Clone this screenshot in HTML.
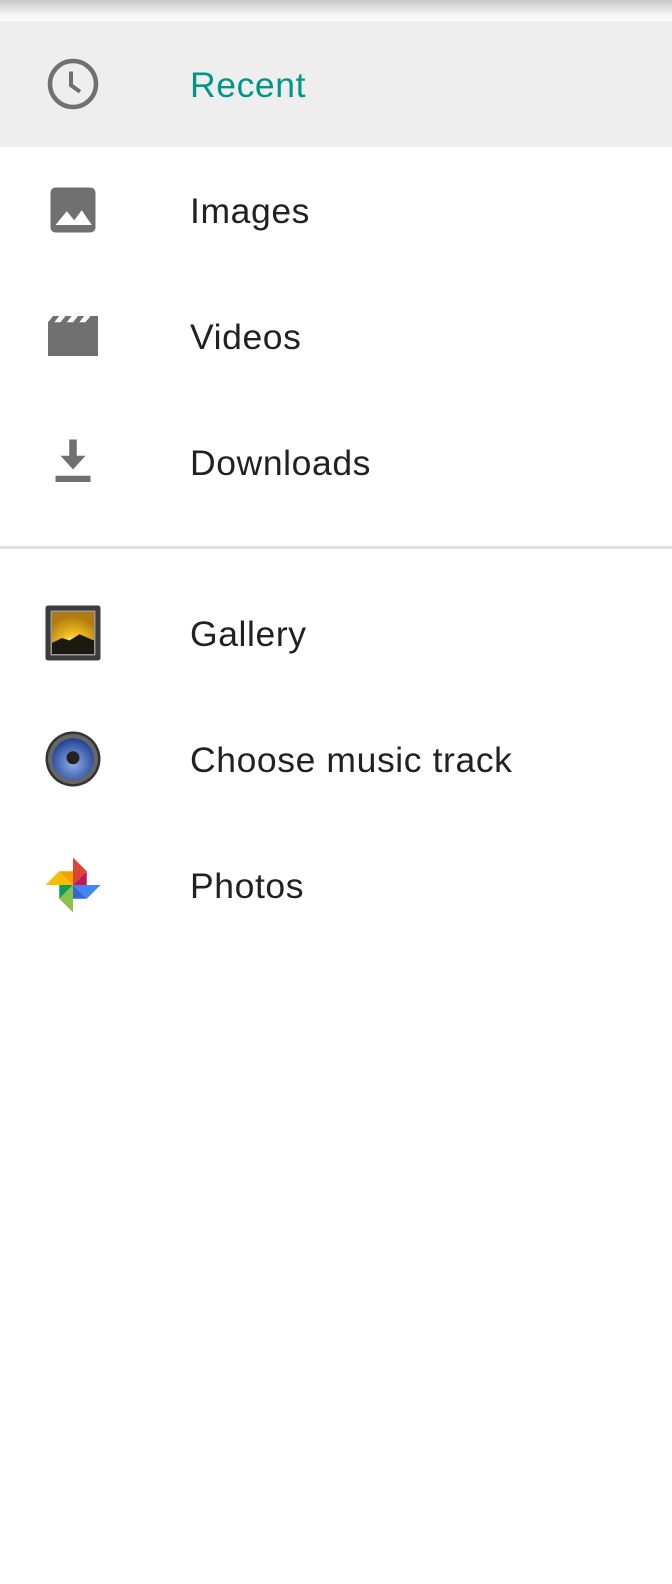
<!DOCTYPE html>
<html><head><meta charset="utf-8"><style>
body{margin:0;width:672px;height:1584px;background:#fff;font-family:"Liberation Sans",sans-serif;position:relative;overflow:hidden}
.sh{position:absolute;left:0;top:0;width:672px;height:21px;background:linear-gradient(#c8c8c8,#f4f4f4 70%,#fafafa)}
.row{position:absolute;left:0;width:672px;height:126px}
.t{position:absolute;left:190px;top:1px;line-height:126px;font-size:35.5px;letter-spacing:0.6px;color:#212121}
.ic{position:absolute;left:43px;top:33px;width:60px;height:60px}
</style></head><body>
<div class="sh"></div>
<div class="row" style="top:21px;background:#eeeeee">
<svg class="ic" viewBox="0 0 24 24"><circle cx="12" cy="12" r="9.2" fill="none" stroke="#707070" stroke-width="1.8"/><path d="M11.2 7v5.5l3.6 2.6" fill="none" stroke="#707070" stroke-width="1.6"/></svg>
<div class="t" style="color:#009688">Recent</div></div>
<div class="row" style="top:147px">
<svg class="ic" viewBox="0 0 24 24"><rect x="3" y="3" width="18" height="18" rx="2" fill="#707070"/><path d="M5 18l4.5-5.5 3 3.6 3-4L19.5 18z" fill="#fff"/></svg>
<div class="t">Images</div></div>
<div class="row" style="top:273px">
<svg class="ic" viewBox="0 0 24 24"><path d="M2 6.5L4 4h2.5L4.5 6.5h2.5L9 4h2.5L9.5 6.5H12L14 4h2.5l-2 2.5H17L19 4h3v16H2z" fill="#707070"/></svg>
<div class="t">Videos</div></div>
<div class="row" style="top:399px">
<svg class="ic" viewBox="0 0 24 24"><path d="M10.5 3h3v6.5h3.5L12 15 7 9.5h3.5zM5 17.5h14V20H5z" fill="#707070"/></svg>
<div class="t">Downloads</div></div>
<div style="position:absolute;left:0;top:546px;width:672px;height:3px;background:#e0e0e0"></div>
<div class="row" style="top:570px">
<svg class="ic" viewBox="0 0 24 24"><defs><radialGradient id="g" cx="50%" cy="80%" r="70%"><stop offset="0" stop-color="#fff6a0"/><stop offset=".4" stop-color="#f2c020"/><stop offset="1" stop-color="#b07a10"/></radialGradient></defs><rect x="1" y="1" width="22" height="22" rx="1" fill="#3c3c3c"/><rect x="3" y="3" width="18" height="18" fill="#999"/><rect x="3.6" y="3.6" width="16.8" height="16.8" fill="url(#g)"/><path d="M3.6 16l4-2 3 1 4-2.5 5.8 2.5v5.4H3.6z" fill="#1a1a10"/></svg>
<div class="t">Gallery</div></div>
<div class="row" style="top:696px">
<svg class="ic" viewBox="0 0 24 24"><defs><radialGradient id="b" cx="50%" cy="60%" r="60%"><stop offset="0" stop-color="#8fb0ef"/><stop offset="1" stop-color="#1f3f90"/></radialGradient></defs><circle cx="12" cy="12" r="11" fill="#333"/><circle cx="12" cy="12" r="10" fill="#666"/><circle cx="12" cy="12" r="8.3" fill="url(#b)"/><circle cx="12" cy="11.5" r="2.6" fill="#222"/></svg>
<div class="t">Choose music track</div></div>
<div class="row" style="top:822px">
<svg class="ic" viewBox="0 0 24 24"><path d="M12 12V1l5.5 5.5z" fill="#db4437"/><path d="M12 12h0L17.5 6.5V12z" fill="#c2185b"/><path d="M12 12h11l-5.5 5.5z" fill="#4285f4"/><path d="M12 12l5.5 5.5H12z" fill="#3367d6"/><path d="M12 12v11l-5.5-5.5z" fill="#8bc34a"/><path d="M12 12l-5.5 5.5V12z" fill="#0f9d58"/><path d="M12 12H1l5.5-5.5z" fill="#fbbc05"/><path d="M12 12L6.5 6.5H12z" fill="#f4a000"/></svg>
<div class="t">Photos</div></div>
</body></html>
